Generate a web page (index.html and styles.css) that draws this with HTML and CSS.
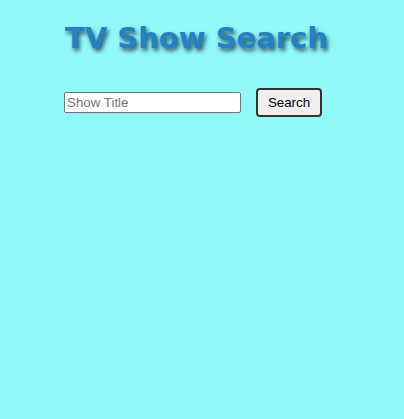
FILE: index.html
```html
<!DOCTYPE html>
<html>
<head>
<meta charset="utf-8">
<link rel="stylesheet" href="styles.css">
</head>
<body>
<div class="page">
  <h1 class="title">TV Show Search</h1>
  <form class="search">
    <input class="search-input" type="text" placeholder="Show Title">
    <button class="search-btn" type="button">Search</button>
  </form>
</div>
</body>
</html>
```
FILE: styles.css
```css
html, body {
  margin: 0;
  padding: 0;
  background: #92f9f9;
  height: 100%;
}
.page {
  padding: 18px 0 0 64px;
}
.title {
  margin: 0;
  padding-left: 1px;
  font-family: "DejaVu Sans", sans-serif;
  font-weight: bold;
  font-size: 29px;
  line-height: 40px;
  color: #2381c4;
  text-shadow: 2px 3px 4px #2c5a6a;
  letter-spacing: 0px;
}
.search {
  display: flex;
  align-items: center;
  gap: 15px;
  margin-top: 30px;
}
.search-input {
  box-sizing: border-box;
  width: 177px;
  height: 21px;
  margin: 0;
  padding: 1px 2px;
  border: 1px solid #767676;
  border-radius: 2px;
  background: #fff;
  font-family: "Liberation Sans", Arial, sans-serif;
  font-size: 13.33px;
}
.search-input::placeholder {
  color: #757575;
}
.search-btn {
  box-sizing: border-box;
  width: 66px;
  height: 29px;
  margin: 0;
  padding: 0;
  border: 2px solid #333;
  border-radius: 4px;
  background: #efefef;
  color: #000;
  font-family: "Liberation Sans", Arial, sans-serif;
  font-size: 13.33px;
}
```
